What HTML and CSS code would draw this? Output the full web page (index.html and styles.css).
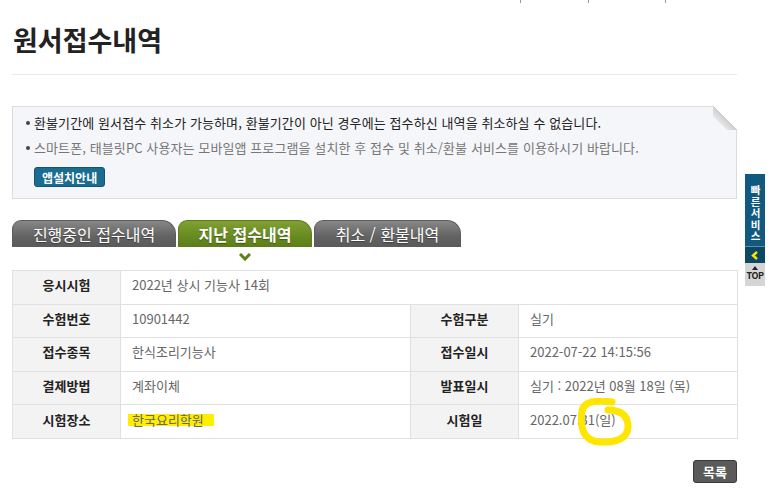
FILE: index.html
```html
<!DOCTYPE html>
<html lang="ko">

<head>
    <meta charset="UTF-8">
    <meta name="viewport" content="width=device-width, initial-scale=1.0">
    <title>원서접수내역</title>
    <link rel="stylesheet" href="styles.css">
</head>

<body>
    <div class="topnav">
        <span class="sep sep1"></span>
        <span class="sep sep2"></span>
        <span class="sep sep3"></span>
    </div>
    <main class="page">
        <h1 class="title">원서접수내역</h1>

        <div class="notice">
            <ul>
                <li class="dark">환불기간에 원서접수 취소가 가능하며, 환불기간이 아닌 경우에는 접수하신 내역을 취소하실 수 없습니다.</li>
                <li>스마트폰, 태블릿PC 사용자는 모바일앱 프로그램을 설치한 후 접수 및 취소/환불 서비스를 이용하시기 바랍니다.</li>
            </ul>
            <a class="app-btn" href="#">앱설치안내</a>
            <span class="fold"></span>
        </div>

        <div class="tabs">
            <a class="tab" href="#">진행중인 접수내역</a>
            <a class="tab on" href="#">지난 접수내역</a>
            <a class="tab" href="#">취소 / 환불내역</a>
        </div>
        <div class="tab-mark">
            <svg width="12" height="8" viewBox="0 0 12 8">
                <path d="M1 1 L6 6 L11 1" fill="none" stroke="#5e7f1a" stroke-width="3"/>
            </svg>
        </div>

        <table class="info">
            <colgroup>
                <col class="c-th">
                <col class="c-td1">
                <col class="c-th">
                <col class="c-td2">
            </colgroup>
            <tr>
                <th>응시시험</th>
                <td colspan="3">2022년 상시 기능사 14회</td>
            </tr>
            <tr>
                <th>수험번호</th>
                <td>10901442</td>
                <th>수험구분</th>
                <td>실기</td>
            </tr>
            <tr>
                <th>접수종목</th>
                <td>한식조리기능사</td>
                <th>접수일시</th>
                <td>2022-07-22 14:15:56</td>
            </tr>
            <tr>
                <th>결제방법</th>
                <td>계좌이체</td>
                <th>발표일시</th>
                <td>실기 : 2022년 08월 18일 (목)</td>
            </tr>
            <tr>
                <th>시험장소</th>
                <td><span class="mark">한국요리학원</span></td>
                <th>시험일</th>
                <td>2022.07.31(일)</td>
            </tr>
        </table>

        <div class="bottom">
            <a class="list-btn" href="#">목록</a>
        </div>
    </main>

    <!-- 손으로 그린 동그라미 -->
    <svg class="scribble" width="60" height="52" viewBox="0 0 60 52">
        <path d="M36 4 C22 2, 8 3, 6 13 C4 28, 6 43, 24 44 C42 45, 53 39, 52 27 C51 17, 44 12, 32 12"
              fill="none" stroke="#ffe600" stroke-width="7" stroke-linecap="round" stroke-linejoin="round"/>
    </svg>

    <div class="quick">
        <div class="quick-title"><span class="vtext">빠른서비스</span></div>
        <div class="quick-arrow">
            <svg width="8" height="9" viewBox="0 0 8 9">
                <path d="M6 1 L2 4.5 L6 8" fill="none" stroke="#ffe400" stroke-width="2.4"/>
            </svg>
        </div>
        <div class="quick-top"><span class="tri"></span>TOP</div>
    </div>
</body>

</html>
```

FILE: styles.css
```css
body {
    margin: 0;
    font-family: "Noto Sans CJK KR", "Malgun Gothic", sans-serif;
    color: #333;
    background: #fff;
}
a {
    text-decoration: none;
}
.topnav {
    height: 4px;
    position: relative;
}
.sep {
    position: absolute;
    top: 0;
    width: 1px;
    height: 3px;
    background: #999;
}
.sep1 { left: 520px; }
.sep2 { left: 588px; }
.sep3 { left: 665px; }

.page {
    width: 725px;
    padding-left: 12px;
}
.title {
    margin: 18px 0 0;
    padding: 0 0 0 1px;
    height: 52px;
    line-height: 36px;
    font-size: 27px;
    font-weight: bold;
    color: #222;
    border-bottom: 1px solid #e9e9e9;
}

/* 안내 박스 */
.notice {
    position: relative;
    margin-top: 31px;
    border: 1px solid #dcdcdc;
    background: #f5f6fa;
    padding: 3px 0 10px 21px;
}
.notice ul {
    margin: 0;
    padding: 0;
    list-style: none;
}
.notice li {
    position: relative;
    font-size: 13px;
    line-height: 25px;
    color: #777;
    letter-spacing: 0.1px;
}
.notice li.dark {
    color: #222;
}
.notice li::before {
    content: "";
    position: absolute;
    left: -8px;
    top: 11px;
    width: 4px;
    height: 4px;
    border-radius: 50%;
    background: #444;
}
.app-btn {
    display: inline-block;
    margin-top: 7px;
    height: 20px;
    line-height: 19px;
    padding: 0 7px;
    box-sizing: border-box;
    font-size: 12px;
    font-weight: bold;
    color: #fff;
    background: #1a6c90;
    border: 1px solid #125571;
    border-radius: 3px;
}
.fold {
    position: absolute;
    top: -1px;
    right: -1px;
    width: 24px;
    height: 24px;
    background: linear-gradient(225deg, #fff 50%, #cfcfcf 50%, #e6e6e6 70%, #f5f6fa 72%);
}

/* 탭 */
.tabs {
    display: flex;
    gap: 2px;
    margin-top: 21px;
}
.tab {
    display: block;
    height: 27px;
    line-height: 27px;
    box-sizing: border-box;
    text-align: center;
    font-size: 16px;
    color: #fff;
    background: linear-gradient(#878787, #626262 60%, #5a5a5a);
    border: 1px solid #5b5b5b;
    border-bottom: 0;
    border-radius: 9px 14px 0 0;
    text-shadow: 0 1px 1px rgba(0, 0, 0, 0.35);
}
.tab:nth-child(1) { width: 164px; }
.tab:nth-child(2) { width: 134px; }
.tab:nth-child(3) { width: 147px; }
.tab.on {
    font-weight: bold;
    background: linear-gradient(#80a032, #678a20 60%, #5c7c1a);
    border-color: #5d7c1b;
}
.tab-mark {
    width: 134px;
    margin-left: 166px;
    height: 23px;
    display: flex;
    justify-content: center;
    padding-top: 6px;
    box-sizing: border-box;
}

/* 정보 표 */
.info {
    width: 725px;
    border-collapse: collapse;
    table-layout: fixed;
    font-size: 13px;
    line-height: 16px;
}
.c-th { width: 108px; }
.c-td1 { width: 290px; }
.c-td2 { width: 219px; }
.info tr {
    height: 33.6px;
}
.info th,
.info td {
    border: 1px solid #e0e0e0;
    padding: 0 0 4px;
}
.info th {
    background: #f3f3f3;
    color: #222;
    font-weight: bold;
    text-align: center;
}
.info td {
    padding-left: 11px;
    color: #666;
    text-align: left;
}
.mark {
    display: inline-block;
    height: 12px;
    line-height: 12px;
    margin-left: -4px;
    padding: 0 10px 0 4px;
    background: #ffee00;
    color: #666;
}

.bottom {
    display: flex;
    justify-content: flex-end;
    padding-top: 21px;
}
.list-btn {
    display: block;
    width: 44px;
    height: 23px;
    line-height: 21px;
    box-sizing: border-box;
    text-align: center;
    font-size: 13px;
    font-weight: bold;
    color: #fff;
    background: #5a5a5a;
    border: 1px solid #3a3a3a;
    border-radius: 3px;
}

/* 형광펜 표시 */
.scribble {
    position: absolute;
    left: 576px;
    top: 398px;
}

/* 빠른서비스 */
.quick {
    position: fixed;
    left: 745px;
    top: 174px;
    width: 20px;
    text-align: center;
}
.quick-title {
    height: 73px;
    padding-top: 8px;
    box-sizing: border-box;
    background: #11597f;
    color: #fff;
    font-size: 10.5px;
    font-weight: bold;
    border-bottom: 1px solid #5d8fa8;
    display: flex;
    justify-content: center;
}
.vtext {
    writing-mode: vertical-rl;
    text-orientation: upright;
    letter-spacing: 1px;
    line-height: 20px;
}
.quick-arrow {
    height: 16px;
    background: #0c4764;
    display: flex;
    justify-content: center;
    align-items: center;
}
.quick-top {
    height: 23px;
    background: #d5d5d5;
    color: #222;
    font-size: 9px;
    font-weight: bold;
    line-height: 10px;
    padding-top: 3px;
    box-sizing: border-box;
    letter-spacing: -0.5px;
}
.tri {
    display: block;
    width: 0;
    height: 0;
    margin: 0 auto 1px;
    border-left: 3px solid transparent;
    border-right: 3px solid transparent;
    border-bottom: 4px solid #222;
}
```
